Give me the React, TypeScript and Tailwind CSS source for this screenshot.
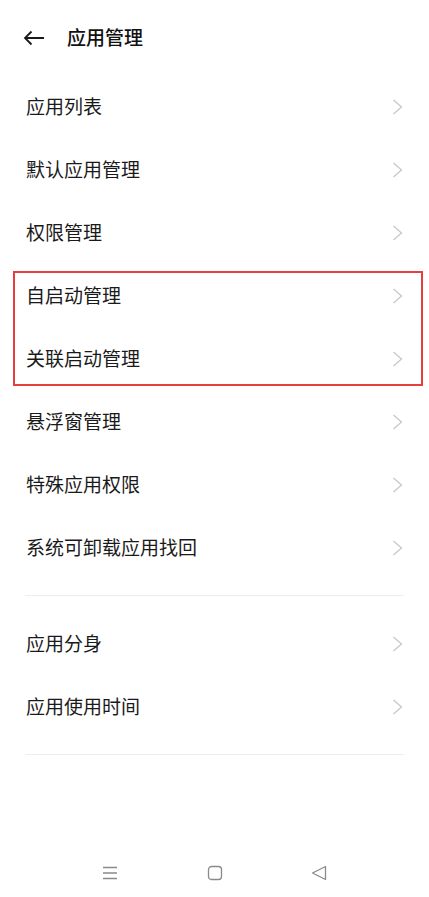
import React from 'react';

const font = { fontFamily: '"Noto Sans CJK SC", "Noto Sans", sans-serif' };

const groupA = ['应用列表', '默认应用管理', '权限管理', '自启动管理', '关联启动管理', '悬浮窗管理', '特殊应用权限', '系统可卸载应用找回'];
const groupB = ['应用分身', '应用使用时间'];

const Chevron = () => (
  <svg width="11" height="16" viewBox="0 0 11 16" fill="none">
    <path d="M1.5 1 L9.5 8 L1.5 15" stroke="#c8c8c8" strokeWidth="1.3" />
  </svg>
);

const Row: React.FC<{ label: string }> = ({ label }) => (
  <div className="flex h-[63px] items-center justify-between pl-[26px] pr-[26px]">
    <span className="text-[19px] text-[#1a1a1a]">{label}</span>
    <Chevron />
  </div>
);

export default function App() {
  return (
    <div className="relative flex h-[897px] w-[429px] flex-col overflow-hidden bg-white" style={font}>
      {/* 顶部标题栏 */}
      <div className="flex h-[75px] items-center pl-[23px]">
        <svg width="22" height="16" viewBox="0 0 22 16" fill="none">
          <path d="M21 8 H2 M8.5 1.5 L2 8 L8.5 14.5" stroke="#1a1a1a" strokeWidth="1.8" />
        </svg>
        <span className="ml-[22px] text-[19px] font-medium text-[#111]">应用管理</span>
      </div>

      <div className="relative">
        {groupA.map((l) => (
          <Row key={l} label={l} />
        ))}
        {/* 红色标注框 */}
        <div className="absolute left-[13px] top-[196px] h-[115px] w-[410px] border-2 border-[#e5403f]" />
      </div>

      <div className="mx-[25px] mt-4 h-px bg-[#ededed]" />
      <div className="mt-4">
        {groupB.map((l) => (
          <Row key={l} label={l} />
        ))}
      </div>
      <div className="mx-[25px] mt-4 h-px bg-[#ededed]" />

      {/* 底部导航 */}
      <div className="absolute bottom-0 left-0 flex h-[50px] w-full items-center justify-between px-[102px] pt-[2px]">
        <svg width="16" height="16" viewBox="0 0 16 16" fill="none">
          <path d="M1 2.5 H15 M1 8 H15 M1 13.5 H15" stroke="#8a8a8a" strokeWidth="1.3" />
        </svg>
        <svg width="16" height="16" viewBox="0 0 16 16" fill="none">
          <rect x="1.5" y="1.5" width="13" height="13" rx="3" stroke="#8a8a8a" strokeWidth="1.3" />
        </svg>
        <svg width="16" height="16" viewBox="0 0 16 16" fill="none">
          <path d="M14.5 1.5 V14.5 L1.5 8 Z" stroke="#8a8a8a" strokeWidth="1.3" strokeLinejoin="round" />
        </svg>
      </div>
    </div>
  );
}
